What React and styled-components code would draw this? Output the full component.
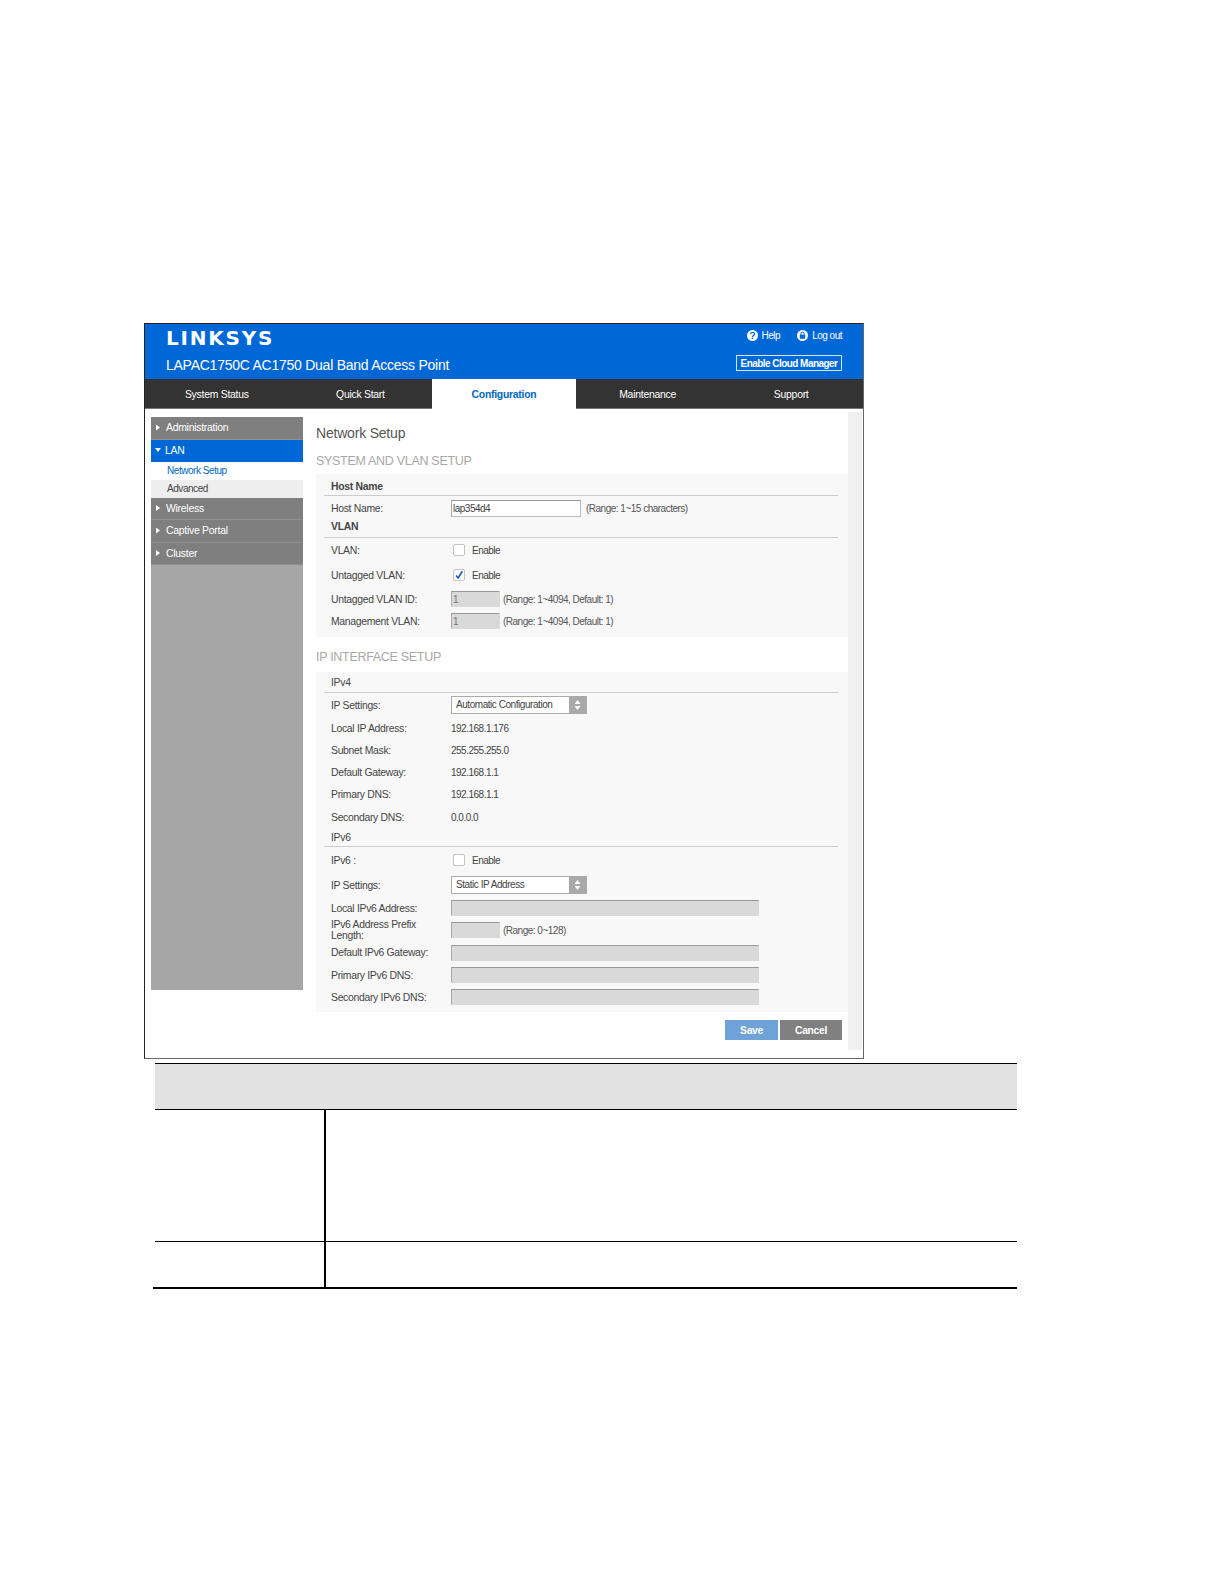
import styled, { createGlobalStyle } from 'styled-components';

const GlobalStyle = createGlobalStyle`
  html, body {
    margin: 0;
    padding: 0;
    background: #ffffff;
  }
  * {
    box-sizing: border-box;
  }
  body {
    font-family: "Liberation Sans", Arial, sans-serif;
    font-size: 10.4px;
    color: #444444;
  }
`;

const Page = styled.div`
  width: 1224px;
  height: 1584px;
  padding: 323px 0 0 144px;
`;

const Frame = styled.div`
  width: 720px;
  height: 736px;
  border: 1px solid #666666;
  border-top-color: #222222;
  border-left-color: #222222;
`;

const Header = styled.header`
  height: 55px;
  background: #0067d6;
  display: flex;
  justify-content: space-between;
  padding: 0 21px;
  color: #ffffff;
`;

const Brand = styled.div`
  display: flex;
  flex-direction: column;
`;

const Logo = styled.div`
  font-family: "DejaVu Sans", "Liberation Sans", sans-serif;
  font-weight: 700;
  font-size: 20px;
  line-height: 15px;
  letter-spacing: 1.8px;
  margin-top: 7px;
  height: 15px;
`;

const ProductName = styled.div`
  font-size: 14px;
  letter-spacing: -0.25px;
  line-height: 16px;
  margin-top: 11px;
`;

const HeaderActions = styled.div`
  display: flex;
  flex-direction: column;
  align-items: flex-end;
`;

const TopLinks = styled.div`
  display: flex;
  gap: 17px;
  height: 16px;
  margin-top: 3px;
  font-size: 10px;
  letter-spacing: -0.5px;
`;

const TopLink = styled.span`
  display: flex;
  align-items: center;
  gap: 4px;
`;

const CloudButton = styled.div`
  width: 106px;
  height: 16px;
  margin-top: 12px;
  border: 1px solid #cfe8ff;
  font-size: 10px;
  letter-spacing: -0.55px;
  font-weight: 700;
  line-height: 16px;
  text-align: center;
  white-space: nowrap;
`;

const Nav = styled.nav`
  height: 30px;
  background: #333333;
  border-bottom: 1px solid #777777;
  display: grid;
  grid-template-columns: repeat(5, 1fr);
`;

const Tab = styled.div`
  height: ${({ $active }) => ($active ? '30px' : '29px')};
  line-height: 31px;
  text-align: center;
  font-size: 10.4px;
  letter-spacing: -0.25px;
  background: ${({ $active }) => ($active ? '#ffffff' : 'transparent')};
  color: ${({ $active }) => ($active ? '#0067c4' : '#ffffff')};
  font-weight: ${({ $active }) => ($active ? 700 : 400)};
`;

const Body = styled.div`
  display: flex;
  padding-left: 6px;
`;

const Sidebar = styled.aside`
  width: 152px;
  height: 573px;
  margin-top: 8px;
  background: #a6a6a6;
`;

const SideItem = styled.div`
  height: ${({ $height }) => $height || 22}px;
  display: flex;
  align-items: center;
  padding-left: 5px;
  padding-bottom: 1px;
  gap: 6px;
  background: ${({ $active }) => ($active ? '#0067d6' : '#7f7f7f')};
  border-bottom: 1px solid ${({ $active }) => ($active ? '#0067d6' : '#8f8f8f')};
  color: #ffffff;
  font-size: 10.4px;
  letter-spacing: -0.25px;
`;

const SideArrow = styled.span`
  width: 4px;
  height: 6px;
  display: block;
  ${({ $open }) =>
    $open
      ? `
    width: 6px;
    height: 4px;
    margin-right: -2px;
    margin-left: -1px;
    clip-path: polygon(0 0, 100% 0, 50% 100%);
  `
      : 'clip-path: polygon(0 0, 100% 50%, 0 100%);'}
  background: #ffffff;
`;

const SubItem = styled.div`
  height: 18px;
  line-height: 18px;
  padding-left: 16px;
  font-size: 10px;
  letter-spacing: -0.45px;
  background: ${({ $active }) => ($active ? '#ffffff' : '#eeeeee')};
  color: ${({ $active }) => ($active ? '#0067c4' : '#444444')};
`;

const Main = styled.main`
  width: 532px;
  margin-left: 13px;
`;

const PageTitle = styled.h1`
  height: 24px;
  margin: 12px 0 0;
  font-size: 14px;
  letter-spacing: -0.2px;
  font-weight: 400;
  line-height: 24px;
  color: #555555;
`;

const SectionHeading = styled.h2`
  height: 21px;
  margin: ${({ $top }) => $top}px 0 ${({ $bottom }) => $bottom}px;
  font-size: 12.5px;
  letter-spacing: -0.3px;
  font-weight: 400;
  line-height: 22px;
  color: #a8a8a8;
`;

const Panel = styled.section`
  height: ${({ $height }) => $height}px;
  padding: 0 10px 0 8px;
  background: #f8f8f8;
`;

const GroupHead = styled.div`
  height: ${({ $height }) => $height}px;
  padding: ${({ $top }) => $top}px 0 0 7px;
  line-height: 13px;
  font-size: 10.4px;
  letter-spacing: -0.28px;
  font-weight: ${({ $bold }) => ($bold ? 700 : 400)};
  color: #444444;
  border-bottom: 1px solid #cccccc;
`;

const Row = styled.div`
  height: ${({ $height }) => $height}px;
  display: grid;
  grid-template-columns: 120px 1fr;
  align-items: center;
  padding-left: 7px;
`;

const Label = styled.div`
  font-size: 10.4px;
  letter-spacing: -0.3px;
  line-height: 11px;
  color: #444444;
  padding-right: 16px;
`;

const Control = styled.div`
  display: flex;
  align-items: center;
`;

const TextField = styled.div`
  width: ${({ $width }) => $width}px;
  height: ${({ $disabled }) => ($disabled ? 16 : 17)}px;
  padding-left: 1px;
  font-size: 10px;
  letter-spacing: -0.5px;
  line-height: 15px;
  color: ${({ $disabled }) => ($disabled ? '#777777' : '#444444')};
  background: ${({ $disabled }) => ($disabled ? '#d9d9d9' : '#ffffff')};
  border: 1px solid ${({ $disabled }) => ($disabled ? '#d9d9d9' : '#bbbbbb')};
  border-top-color: #999999;
  border-left-color: #aaaaaa;
`;

const Hint = styled.span`
  margin-left: ${({ $gap }) => $gap || 3}px;
  font-size: 10px;
  letter-spacing: -0.5px;
  color: #555555;
`;

const CheckBox = styled.span`
  width: 12px;
  height: 12px;
  margin-left: 2px;
  margin-right: 7px;
  background: #ffffff;
  border: 1px solid #c4c4c4;
  border-radius: 2px;
  display: flex;
  align-items: center;
  justify-content: center;
  overflow: visible;
`;

const Select = styled.div`
  width: 136px;
  height: 18px;
  display: flex;
  background: #ffffff;
  border: 1px solid #aaaaaa;
`;

const SelectText = styled.span`
  flex: 1;
  padding-left: 4px;
  font-size: 10px;
  letter-spacing: -0.45px;
  line-height: 16px;
`;

const SelectArrows = styled.span`
  width: 17px;
  background: #a9a9a9;
  display: flex;
  flex-direction: column;
  align-items: center;
  justify-content: center;
  gap: 2px;
`;

const ArrowUp = styled.span`
  width: 6px;
  height: 4px;
  background: #ffffff;
  clip-path: polygon(50% 0, 100% 100%, 0 100%);
`;

const ArrowDown = styled(ArrowUp)`
  clip-path: polygon(0 0, 100% 0, 50% 100%);
`;

const Value = styled.span`
  font-size: 10px;
  letter-spacing: -0.5px;
  line-height: 13px;
  color: #444444;
`;

const Actions = styled.div`
  display: flex;
  justify-content: flex-end;
  gap: 2px;
  margin-top: 8px;
  padding-right: 6px;
`;

const Button = styled.div`
  width: ${({ $width }) => $width}px;
  height: 20px;
  line-height: 21px;
  text-align: center;
  color: #ffffff;
  font-size: 10.3px;
  letter-spacing: -0.3px;
  font-weight: 700;
  background: ${({ $primary }) => ($primary ? '#6fa3d8' : '#808080')};
`;

const ScrollTrack = styled.div`
  width: 14px;
  height: 638px;
  margin: 3px 0 0 0;
  background: #f0f0f0;
`;

const DocTable = styled.div`
  width: 864px;
  margin: 4px 0 0 9px;
`;

const TableHead = styled.div`
  height: 47px;
  margin-left: 2px;
  width: 862px;
  background: #e2e2e2;
  border-top: 1px solid #000000;
  border-bottom: 1px solid #000000;
`;

const TableRow = styled.div`
  height: ${({ $height }) => $height}px;
  margin-left: 2px;
  display: flex;
  border-bottom: ${({ $last }) => ($last ? 0 : 1)}px solid #000000;
`;

const KeyCell = styled.div`
  width: 171px;
  height: 100%;
  border-right: 2px solid #000000;
`;

const TableEnd = styled.div`
  height: 2px;
  background: #000000;
`;

function HelpIcon() {
  return (
    <svg width="11" height="11" viewBox="0 0 11 11">
      <circle cx="5.5" cy="5.5" r="5.5" fill="#ffffff" />
      <path d="M3.6 4.2c.1-2.4 3.9-2.4 3.9-.2 0 1.5-2 1.4-2 2.9" fill="none" stroke="#0067d6" strokeWidth="1.3" />
      <rect x="4.8" y="7.6" width="1.4" height="1.4" fill="#0067d6" />
    </svg>
  );
}

function LogoutIcon() {
  return (
    <svg width="11" height="11" viewBox="0 0 11 11">
      <circle cx="5.5" cy="5.5" r="5.5" fill="#ffffff" />
      <rect x="2.8" y="4.8" width="5.4" height="4" rx="0.5" fill="#0067d6" />
      <path d="M3.8 5V3.8a1.7 1.7 0 0 1 3.4 0V5" fill="none" stroke="#0067d6" strokeWidth="1" />
    </svg>
  );
}

function CheckMark() {
  return (
    <svg width="12" height="12" viewBox="0 0 12 12">
      <path d="M2.5 6.5 5 9.5 10 1.5" fill="none" stroke="#1a5fc0" strokeWidth="2" />
    </svg>
  );
}

function SelectField({ children }) {
  return (
    <Select>
      <SelectText>{children}</SelectText>
      <SelectArrows>
        <ArrowUp />
        <ArrowDown />
      </SelectArrows>
    </Select>
  );
}

function EnableCheck({ checked }) {
  return (
    <>
      <CheckBox>{checked && <CheckMark />}</CheckBox>
      <Value>Enable</Value>
    </>
  );
}

function FormRow({ label, height = 22, children }) {
  return (
    <Row $height={height}>
      <Label>{label}</Label>
      <Control>{children}</Control>
    </Row>
  );
}

const SIDE_AFTER = [['Wireless', 22], ['Captive Portal', 23], ['Cluster', 22]];
const TABS = ['System Status', 'Quick Start', 'Configuration', 'Maintenance', 'Support'];
const IPV4_VALUES = [
  ['Local IP Address:', '192.168.1.176', 22],
  ['Subnet Mask:', '255.255.255.0', 22],
  ['Default Gateway:', '192.168.1.1', 22],
  ['Primary DNS:', '192.168.1.1', 22],
  ['Secondary DNS:', '0.0.0.0', 24],
];

function App() {
  return (
    <Page>
      <GlobalStyle />
      <Frame>
        <Header>
          <Brand>
            <Logo>LINKSYS</Logo>
            <ProductName>LAPAC1750C AC1750 Dual Band Access Point</ProductName>
          </Brand>
          <HeaderActions>
            <TopLinks>
              <TopLink><HelpIcon />Help</TopLink>
              <TopLink><LogoutIcon />Log out</TopLink>
            </TopLinks>
            <CloudButton>Enable Cloud Manager</CloudButton>
          </HeaderActions>
        </Header>
        <Nav>
          {TABS.map((tab) => (
            <Tab key={tab} $active={tab === 'Configuration'}>{tab}</Tab>
          ))}
        </Nav>
        <Body>
          <Sidebar>
            <SideItem $height={23}><SideArrow />Administration</SideItem>
            <SideItem $active><SideArrow $open />LAN</SideItem>
            <SubItem $active>Network Setup</SubItem>
            <SubItem>Advanced</SubItem>
            {SIDE_AFTER.map(([item, height]) => (
              <SideItem key={item} $height={height}><SideArrow />{item}</SideItem>
            ))}
          </Sidebar>
          <Main>
            <PageTitle>Network Setup</PageTitle>
            <SectionHeading $top={5} $bottom={3}>SYSTEM AND VLAN SETUP</SectionHeading>
            <Panel $height={163}>
              <GroupHead $height={22} $top={6} $bold>Host Name</GroupHead>
              <FormRow label="Host Name:" height={24}>
                <TextField $width={130}>lap354d4</TextField>
                <Hint $gap={5}>(Range: 1~15 characters)</Hint>
              </FormRow>
              <GroupHead $height={18} $top={0} $bold>VLAN</GroupHead>
              <FormRow label="VLAN:" height={24}><EnableCheck /></FormRow>
              <FormRow label="Untagged VLAN:" height={26}><EnableCheck checked /></FormRow>
              <FormRow label="Untagged VLAN ID:">
                <TextField $width={49} $disabled>1</TextField>
                <Hint>(Range: 1~4094, Default: 1)</Hint>
              </FormRow>
              <FormRow label="Management VLAN:">
                <TextField $width={49} $disabled>1</TextField>
                <Hint>(Range: 1~4094, Default: 1)</Hint>
              </FormRow>
            </Panel>
            <SectionHeading $top={9} $bottom={5}>IP INTERFACE SETUP</SectionHeading>
            <Panel $height={340}>
              <GroupHead $height={21} $top={4}>IPv4</GroupHead>
              <FormRow label="IP Settings:" height={24}>
                <SelectField>Automatic Configuration</SelectField>
              </FormRow>
              {IPV4_VALUES.map(([label, value, height]) => (
                <FormRow key={label} label={label} height={height}><Value>{value}</Value></FormRow>
              ))}
              <GroupHead $height={18} $top={2}>IPv6</GroupHead>
              <FormRow label="IPv6 :" height={26}><EnableCheck /></FormRow>
              <FormRow label="IP Settings:" height={24}>
                <SelectField>Static IP Address</SelectField>
              </FormRow>
              <FormRow label="Local IPv6 Address:"><TextField $width={308} $disabled /></FormRow>
              <FormRow label="IPv6 Address Prefix Length:">
                <TextField $width={49} $disabled />
                <Hint>(Range: 0~128)</Hint>
              </FormRow>
              <FormRow label="Default IPv6 Gateway:" height={23}><TextField $width={308} $disabled /></FormRow>
              <FormRow label="Primary IPv6 DNS:"><TextField $width={308} $disabled /></FormRow>
              <FormRow label="Secondary IPv6 DNS:"><TextField $width={308} $disabled /></FormRow>
            </Panel>
            <Actions>
              <Button $primary $width={53}>Save</Button>
              <Button $width={62}>Cancel</Button>
            </Actions>
          </Main>
          <ScrollTrack />
        </Body>
      </Frame>
      <DocTable>
        <TableHead />
        <TableRow $height={132}><KeyCell /></TableRow>
        <TableRow $height={45} $last><KeyCell /></TableRow>
        <TableEnd />
      </DocTable>
    </Page>
  );
}

export default App;
